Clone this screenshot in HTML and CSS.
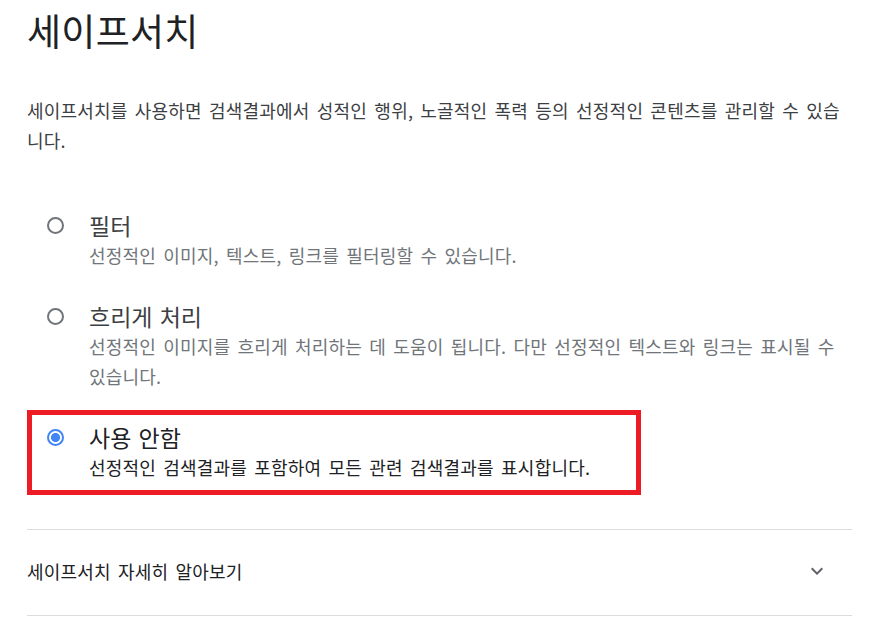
FILE: index.html
```html
<html>
<head>
<title>세이프서치</title>
<meta charset="utf-8"/>
<meta name="viewport" content="width=device-width, initial-scale=1"/>
<link rel="stylesheet" href="styles.css">
</head>

<body>

<div id="page">
  <h1 class="title">세이프서치</h1>
  <p class="intro">세이프서치를 사용하면 검색결과에서 성적인 행위, 노골적인 폭력 등의 선정적인 콘텐츠를 관리할 수 있습니다.</p>

  <div class="options">
    <label class="option">
      <input type="radio" name="safe" value="filter" />
      <span class="text">
        <span class="name">필터</span>
        <span class="desc">선정적인 이미지, 텍스트, 링크를 필터링할 수 있습니다.</span>
      </span>
    </label>

    <label class="option">
      <input type="radio" name="safe" value="blur" />
      <span class="text">
        <span class="name">흐리게 처리</span>
        <span class="desc">선정적인 이미지를 흐리게 처리하는 데 도움이 됩니다. 다만 선정적인 텍스트와 링크는 표시될 수 있습니다.</span>
      </span>
    </label>

    <label class="option selected">
      <input type="radio" name="safe" value="off" checked />
      <span class="text">
        <span class="name">사용 안함</span>
        <span class="desc">선정적인 검색결과를 포함하여 모든 관련 검색결과를 표시합니다.</span>
      </span>
    </label>
  </div>

  <div class="more">
    <span>세이프서치 자세히 알아보기</span>
    <svg class="chevron" width="24" height="24" viewBox="0 0 24 24"><path d="M16.59 8.59L12 13.17 7.41 8.59 6 10l6 6 6-6z"/></svg>
  </div>
</div>

</body>
</html>
```

FILE: styles.css
```css
html, body {margin:0; padding:0; background:#fff;}
body {
 color: #202124;
 font-family: "Noto Sans CJK KR", "Noto Sans", sans-serif;
}

#page {width:825px; padding:0 20px 0 27px;}

.title {
 margin: 8px 0 0;
 font-size: 37px;
 font-weight: normal;
 line-height: 44px;
 letter-spacing: 0.3px;
 color: #202124;
}

.intro {
 margin: 43px 0 0;
 font-size: 18px;
 line-height: 30px;
 letter-spacing: 0.2px;
 word-spacing: 3px;
 color: #3c4043;
}

.options {
 display: flex;
 flex-direction: column;
 gap: 16px;
 margin-top: 48px;
 padding-left: 5px;
}
.option {
 display: flex;
 gap: 25px;
 padding: 7px 8px 8px 15px;
 cursor: pointer;
}
.option input {
 appearance: none;
 -webkit-appearance: none;
 flex: none;
 width: 17px;
 height: 17px;
 margin: 7px 0 0;
 border: 2px solid #70757a;
 border-radius: 50%;
 background: #fff;
}
.option input:checked {
 border-color: #4285f4;
 background: radial-gradient(circle, #4285f4 0, #4285f4 4.2px, #fff 4.8px);
}
.option .text {display:flex; flex-direction:column;}
.option .name {
 font-size: 23px;
 line-height: 30px;
 word-spacing: 2px;
 color: #3c4043;
}
.option .desc {
 font-size: 18px;
 line-height: 30px;
 letter-spacing: 0.2px;
 word-spacing: 3px;
 color: #70757a;
}
.option.selected {
 width: 604px;
 box-sizing: border-box;
 outline: 5px solid #ed1c24;
}
.option.selected .name, .option.selected .desc {color:#202124;}

.more {
 display: flex;
 align-items: center;
 justify-content: space-between;
 height: 81px;
 margin-top: 39px;
 padding: 0 23px 4px 0;
 border-top: 1px solid #dadce0;
 border-bottom: 1px solid #dadce0;
 font-size: 18px;
 letter-spacing: 0.2px;
 word-spacing: 3px;
 color: #202124;
}
.chevron {fill:#5f6368;}
```
